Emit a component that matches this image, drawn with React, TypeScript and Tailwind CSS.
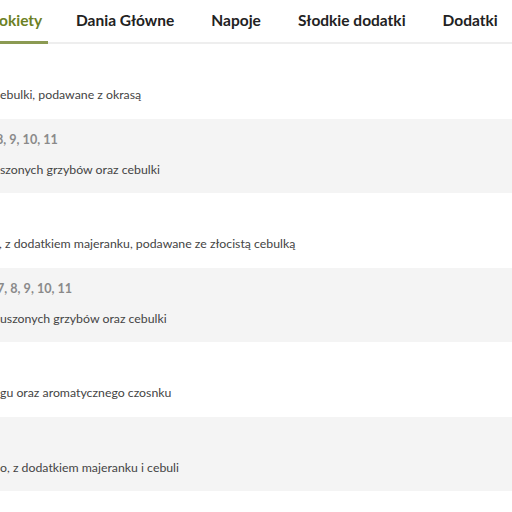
import React from 'react';

interface MenuRow {
  allergens?: string;
  allergenShift?: string;
  description: string;
  descShift?: string;
}

const tabs = ['okiety', 'Dania Główne', 'Napoje', 'Słodkie dodatki', 'Dodatki'];

const rows: MenuRow[] = [
  { description: 'ebulki, podawane z okrasą' },
  { allergens: '8, 9, 10, 11', allergenShift: '-ml-[4px]', description: 'szonych grzybów oraz cebulki' },
  { description: ', z dodatkiem majeranku, podawane ze złocistą cebulką', descShift: '-ml-[1px]' },
  { allergens: '7, 8, 9, 10, 11', allergenShift: '-ml-[3px]', description: 'uszonych grzybów oraz cebulki' },
  { description: 'gu oraz aromatycznego czosnku' },
  { description: 'o, z dodatkiem majeranku i cebuli' },
  { description: '' },
];

export default function App() {
  return (
    <div className="w-[512px] h-[512px] overflow-hidden bg-white" style={{ fontFamily: 'Lato, "Open Sans", sans-serif' }}>
      <div className="flex h-[44px] border-b-2 border-[#eeeeee] whitespace-nowrap">
        {tabs.map((tab, i) => (
          <div
            key={tab}
            className={
              i === 0
                ? 'relative h-[44px] pr-[9px] -mb-[2px] border-b-[3px] border-[#8b9a52] text-[#6c8125] text-[15.5px] font-bold leading-[40px] w-[48px] shrink-0'
                : 'h-[44px] ml-[19px] px-[9px] text-[#222222] text-[15.5px] font-bold leading-[40px] shrink-0'
            }
          >
            <span className={i === 0 ? '-ml-[1px]' : ''}>{tab}</span>
          </div>
        ))}
      </div>
      <div>
        {rows.map((row, i) => (
          <div
            key={i}
            className={`h-[74.5px] pt-[11px] whitespace-nowrap overflow-hidden ${i % 2 === 1 ? 'bg-[#f4f4f4]' : 'bg-white'}`}
          >
            <div className={`h-[20px] leading-[20px] text-[12.6px] font-bold text-[#8a8a8a] ${row.allergenShift ?? ''}`}>
              {row.allergens ?? ''}
            </div>
            <div className={`mt-[10px] h-[20px] leading-[20px] text-[12.3px] text-[#444444] ${row.descShift ?? ''}`}>
              {row.description}
            </div>
          </div>
        ))}
      </div>
    </div>
  );
}
